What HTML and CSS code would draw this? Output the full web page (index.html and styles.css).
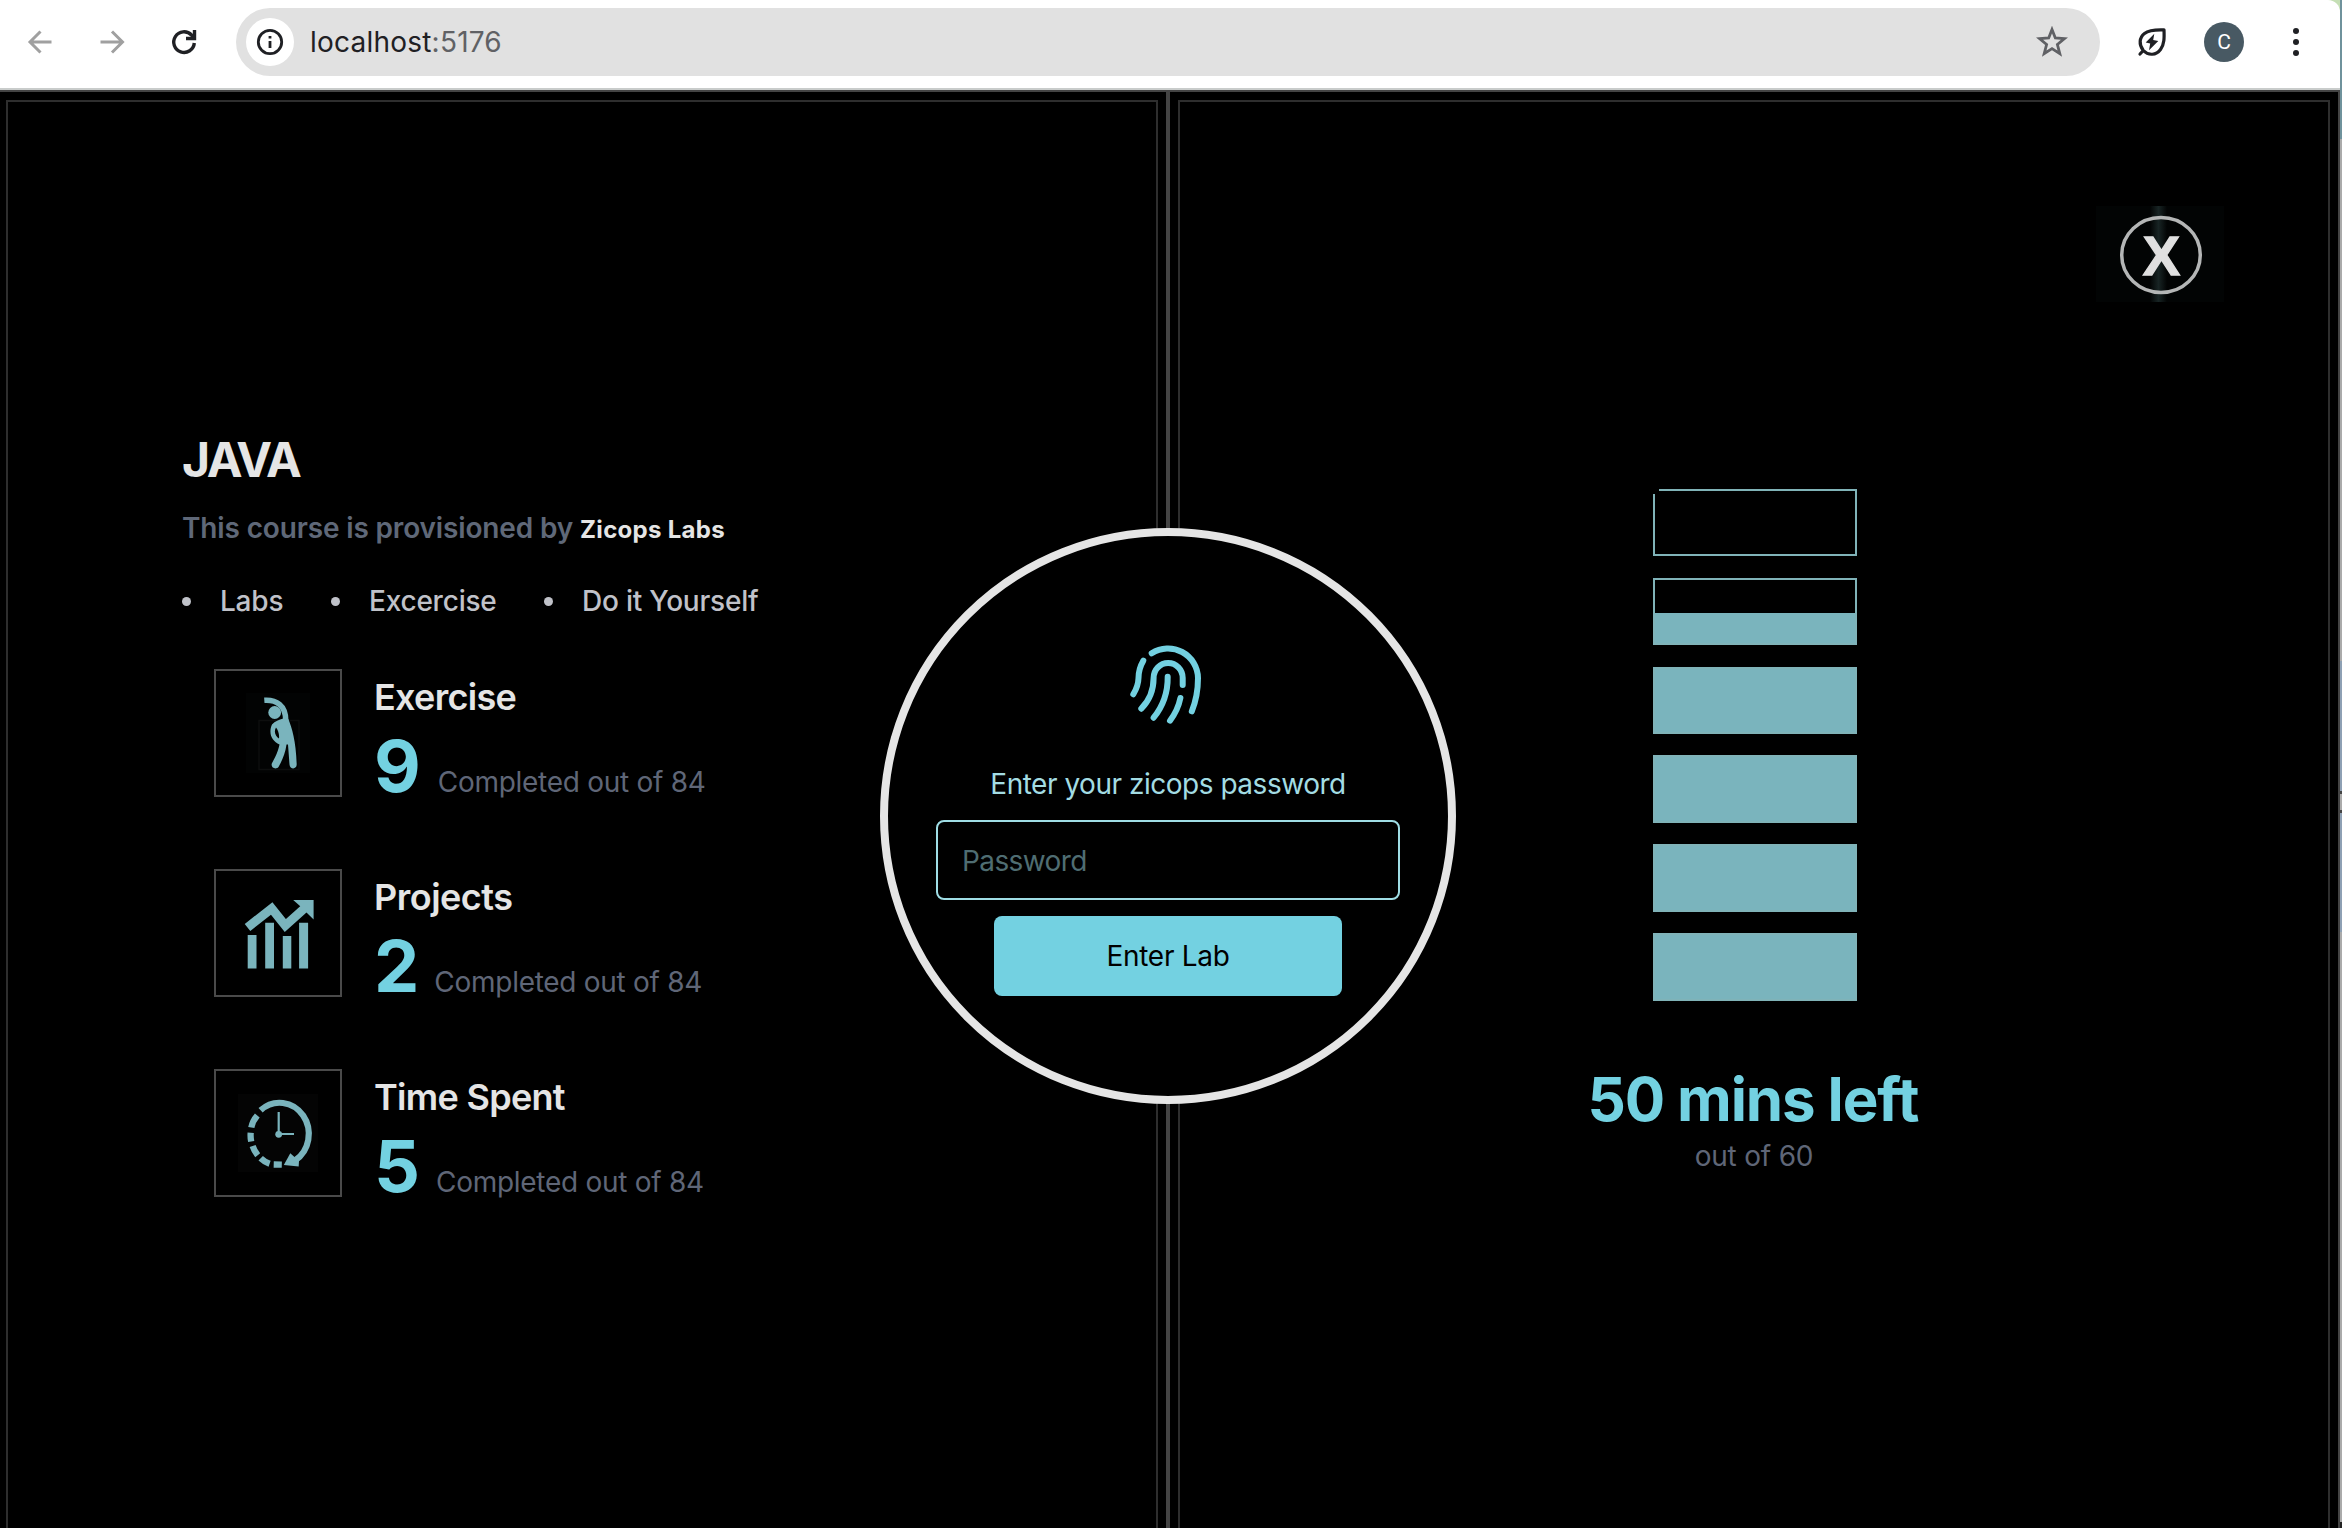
FILE: index.html
```html
<!DOCTYPE html>
<html lang="en">
<head>
<meta charset="utf-8">
<title>Zicops Labs</title>
<link rel="stylesheet" href="styles.css">
</head>
<body>
<div class="window">
  <header class="toolbar">
    <div class="nav">
      <svg class="nav-icon muted" viewBox="0 0 32 32"><path d="M27.500 16H6.500M16.500 5.500 6 16 16.500 26.500"/></svg>
      <svg class="nav-icon muted" viewBox="0 0 32 32"><path d="M4.500 16H26.500M16 5.500 26.500 16 16 26.500"/></svg>
      <svg class="nav-icon dark" viewBox="0 0 32 32"><path d="M26.300 17A10.300 10.300 0 1 1 23.500 9L26 11.600"/><path d="M26.500 4V12.500H18"/></svg>
    </div>
    <div class="address">
      <span class="site-info"><svg viewBox="0 0 28 28"><circle cx="14" cy="14" r="11.700"/><path d="M14 13V20M14 8V10.500"/></svg></span>
      <span class="url">localhost<span class="port">:5176</span></span>
      <svg class="star" viewBox="0 0 32 32"><path d="M16 3.500 19.300 12 28.500 12.600 21.400 18.500 23.800 27.600 16 22.600 8.200 27.600 10.600 18.500 3.500 12.600 12.700 12Z"/></svg>
    </div>
    <svg class="leaf" viewBox="0 0 32 32"><path class="leaf-body" d="M7.300 24.500C2.500 18.500 3.400 11.300 8.500 7.400 13 4 20 3.600 28 3.900 28.300 11.500 28.500 18 24.500 23.500 20.200 29.300 12.500 30 7.300 24.500ZM7.300 24.500 4 28"/><path class="leaf-bolt" d="M18.300 7.700 9.700 16.500 14.200 17.500 13 24.300 22.300 14.900 17.200 14Z"/></svg>
    <span class="avatar">C</span>
    <svg class="dots" viewBox="0 0 8 28"><circle cx="4" cy="3" r="3"/><circle cx="4" cy="14" r="3"/><circle cx="4" cy="25" r="3"/></svg>
  </header>

  <main class="page">
    <section class="panel panel-left">
      <div class="frame course">
        <h1 class="title"><span class="t">JAVA</span></h1>
        <p class="provider"><span class="t by">This course is provisioned by</span><span class="t org">Zicops Labs</span></p>
        <ul class="tags">
          <li class="tag-1"><span class="t">Labs</span></li>
          <li class="tag-2"><span class="t">Excercise</span></li>
          <li class="tag-3"><span class="t">Do it Yourself</span></li>
        </ul>
        <div class="stats">
          <article class="stat">
            <div class="stat-icon"><svg viewBox="0 0 124 124">
              <rect x="30" y="22" width="64" height="80" fill="#020303"/>
              <rect x="43" y="49.500" width="40" height="49" fill="none" stroke="#0d0e0e" stroke-width="1.500"/>
              <circle cx="58.700" cy="41.500" r="6.400" class="ink"/>
              <path class="line" stroke-width="5.500" d="M48.300 29.300C60 28.500 70 34 69.800 50"/>
              <path class="ink" d="M67.200 47.500 72.300 48C76 57 80 70 80.700 93.500 80.800 98.700 73.800 98.700 73.500 93.500L72 73.500 70.500 73.500C69.500 82 66 90 62.500 96 60 99 54.500 97 55.800 92.500 60 85 62 80 63.500 73.500 56 70 52 62.500 56 53.500 59 50 63 49 67.200 47.500ZM60 56.500C57.500 61 59.500 65.500 63 67.500 63.500 63 62 59 60 56.500Z" fill-rule="evenodd"/>
            </svg></div>
            <div class="stat-text"><h2><span class="t">Exercise</span></h2><p><b>9</b><span class="t done">Completed out of 84</span></p></div>
          </article>
          <article class="stat projects">
            <div class="stat-icon"><svg viewBox="0 0 124 124">
              <path class="line" stroke-width="9" d="M31.500 56.500 55.700 37.500 69.300 54.500 90 36"/>
              <path class="ink" d="M77.200 29H97.600V48.500L92 43 84 35Z"/>
              <path class="ink" d="M31.700 64h8.800v33.400h-8.800zM49.200 51.800h8.800v45.600h-8.800zM66.800 65h8.500v32.400h-8.500zM83.100 51.800h9v45.600h-9z"/>
            </svg></div>
            <div class="stat-text"><h2><span class="t">Projects</span></h2><p><b>2</b><span class="t done">Completed out of 84</span></p></div>
          </article>
          <article class="stat time">
            <div class="stat-icon"><svg viewBox="0 0 124 124">
              <rect x="22" y="23" width="80" height="78" fill="#040404"/>
              <path class="line" stroke-width="6.200" d="M44.600 39.300A29.200 31.200 0 1 1 79 89.500"/>
              <path class="ink" d="M67.800 94 74.300 82.300 83 90 82.700 95.500Z"/>
              <path class="line" stroke-width="6.300" d="M41.300 44.500Q36.500 50 35.300 56.500M34.700 61.700Q34.300 66 35.200 70.500M36.600 75Q38.300 80 41.700 84.300M44.700 87.300Q48.500 91 53.600 92.800M57.700 93.500 65.800 93.700"/>
              <path class="line" stroke-width="2.200" d="M62.700 41V63H78"/>
              <circle class="ink" cx="62.700" cy="63.300" r="3.400"/>
            </svg></div>
            <div class="stat-text"><h2><span class="t">Time Spent</span></h2><p><b>5</b><span class="t done">Completed out of 84</span></p></div>
          </article>
        </div>
      </div>
    </section>

    <section class="panel panel-right">
      <div class="frame timer">
        <button class="close" aria-label="Close"><svg viewBox="0 0 128 96"><rect width="128" height="96" fill="#020404"/><rect x="54" width="17" height="96" fill="url(#glow)"/><ellipse cx="65" cy="49" rx="39.300" ry="37.500" fill="none" stroke="#b4b6b6" stroke-width="3.500"/><text x="65.500" y="68.500" text-anchor="middle">X</text><defs><linearGradient id="glow"><stop offset="0" stop-color="#020404"/><stop offset=".5" stop-color="#182424"/><stop offset="1" stop-color="#020404"/></linearGradient></defs></svg></button>
        <div class="bars">
          <i class="bar empty"></i><i class="bar half"></i><i class="bar"></i><i class="bar tall"></i><i class="bar tall"></i><i class="bar tall"></i>
        </div>
        <p class="left"><span class="t">50 mins left</span></p>
        <p class="total"><span class="t">out of 60</span></p>
      </div>
    </section>

    <form class="login">
      <svg class="finger" viewBox="0 0 72 80"><path d="M19.700 9.300A30 30 0 0 1 66 34Q66 52 59.800 67.300M11.300 16.700Q6.500 25 6.500 34 6.300 42 1.300 50.300M9.300 64.700Q21.600 52 21.600 34A14.500 15 0 0 1 50.700 34V41M35.700 32.700Q36 56 21.600 73.700M48.400 54Q46 66 38 76.700"/></svg>
      <label class="prompt"><span class="t">Enter your zicops password</span></label>
      <div class="field"><span class="t">Password</span></div>
      <div class="enter"><span class="t">Enter Lab</span></div>
    </form>
  </main>
</div>
<div class="desktop-edge"></div>
</body>
</html>
```
FILE: styles.css
```css
* { box-sizing: border-box; margin: 0; padding: 0; }
body { width: 2342px; height: 1528px; overflow: hidden; display: flex; background: #c5dfb5; font-family: Inter, "Liberation Sans", sans-serif; font-size: 28px; }
.window { width: 2340px; height: 1528px; }
.t { white-space: nowrap; }

.toolbar { height: 92px; background: #fff; border-bottom: 2px solid #444; box-shadow: inset 0 -2px #c9cccb; display: flex; align-items: center; padding: 0 40px 6px 24px; border-radius: 0 12px 0 0; }
.nav { display: flex; gap: 40px; width: 212px; }
.nav-icon { width: 32px; height: 32px; fill: none; stroke-width: 3; flex: none; }
.muted { stroke: #a0a0a0; }
.dark { stroke: #1f2024; stroke-width: 3.4; }
.address { width: 1864px; height: 68px; border-radius: 34px; background: #e1e1e1; display: flex; align-items: center; padding: 0 32px 0 10px; }
.site-info { width: 48px; height: 48px; border-radius: 50%; background: #fff; display: grid; place-items: center; margin-right: 16px; }
.site-info svg { width: 28px; height: 28px; fill: none; stroke: #1f2024; stroke-width: 2.8; }
.url { color: #1f2024; flex: 1; letter-spacing: .22px; }
.port { color: #606165; }
.star { width: 32px; height: 32px; fill: none; stroke: #606165; stroke-width: 2.8; }
.leaf { width: 32px; height: 32px; margin-left: 36px; fill: none; stroke: #1f2024; stroke-width: 3.2; stroke-linecap: round; stroke-linejoin: round; }
.leaf-bolt { fill: #1f2024; stroke: none; }
.avatar { width: 40px; height: 40px; border-radius: 50%; background: #485963; color: #fff; margin-left: 36px; display: grid; place-items: center; font-family: Roboto, sans-serif; font-size: 21px; }
.dots { width: 8px; height: 28px; margin-left: 48px; fill: #1f2024; }

.page { position: relative; height: 1436px; background: #000; display: flex; overflow: hidden; }
.panel { height: 1446px; border: solid #444; border-width: 0 2px; padding: 8px 8px 0; }
.panel-left { width: 1168px; border-left: 0; padding-left: 6px; }
.panel-right { width: 1172px; }
.frame { height: 1440px; border: 2px solid #2e2e2e; }

.course { padding: 330px 0 0 174px; color: #e5e5e5; }
.title { font-size: 48px; font-weight: 700; line-height: 56px; height: 56px; letter-spacing: -2.4px; }
.provider { display: flex; align-items: baseline; gap: 7px; height: 34px; line-height: 34px; margin-top: 23px; font-weight: 600; color: #5f6878; }
.by { letter-spacing: -.15px; }
.org { color: #e5e5e5; font-size: 24px; font-weight: 700; letter-spacing: .3px; }
.tags { display: flex; list-style: none; margin-top: 39px; height: 34px; line-height: 34px; font-weight: 500; color: #c0c2c9; letter-spacing: -.22px; }
.tags li { display: flex; align-items: center; }
.tags li::before { content: ""; width: 9px; height: 9px; border-radius: 50%; background: currentColor; margin-right: 29px; }
.tag-1 { width: 149px; }
.tag-2 { width: 213px; }
.stats { margin: 51px 0 0 32px; display: grid; gap: 72px; }
.stat { display: flex; height: 128px; gap: 32px; }
.stat-icon { width: 128px; height: 128px; border: 2px solid #4a4a4a; }
.stat-icon svg { display: block; }
.ink { fill: #7ab4bd; }
.line { fill: none; stroke: #7ab4bd; }
h2 { font-size: 36px; font-weight: 600; line-height: 44px; height: 56px; padding-top: 6px; letter-spacing: -.7px; }
.projects h2 { letter-spacing: -.5px; }
.stat-text p { display: flex; align-items: baseline; line-height: 72px; height: 72px; margin-top: 5px; color: #5f6677; }
.stat-text b { font-size: 72px; color: #73d1e1; margin-right: 17px; }
.projects b { margin-right: 15px; }
.time b { margin-right: 16px; }
.done { letter-spacing: -.28px; }

.timer { display: flex; flex-direction: column; align-items: center; }
.close { width: 128px; height: 96px; margin: 104px 104px 0 0; align-self: flex-end; background: none; border: 0; }
.close svg { display: block; width: 128px; height: 96px; }
.close text { font: 700 56px "Liberation Sans", sans-serif; fill: #e0e0e0; stroke: #e0e0e0; stroke-width: 1.3; }
.bars { display: grid; grid-auto-rows: 67px; gap: 21.8px; margin: 187px 0 0 2px; }
.bar { display: block; width: 204px; height: 67px; background: #7ab4bd; border: 2px solid #80b3b8; }
.tall { height: 68px; }
.empty { background: #000; position: relative; }
.empty::before { content: ""; position: absolute; left: -2px; top: -2px; width: 6px; height: 5px; background: #000; }
.half { background: linear-gradient(#000 33px, #7ab4bd 33px); }
.left { font-size: 60px; font-weight: 700; line-height: 72px; color: #73d1e1; margin: 63px 2px 0 0; letter-spacing: -1.15px; }
.total { line-height: 34px; color: #5f6677; margin-top: 4px; letter-spacing: -.2px; }

.login { position: absolute; left: 880px; top: 436px; width: 576px; height: 576px; border: 8px solid #e5e5e5; border-radius: 50%; background: #000; display: flex; flex-direction: column; align-items: center; padding-top: 108px; }
.finger { width: 72px; height: 80px; overflow: visible; fill: none; stroke: #73d1e1; stroke-width: 6; stroke-linecap: round; }
.prompt { color: #a3dce3; height: 34px; line-height: 34px; margin-top: 43px; letter-spacing: -.48px; }
.field { width: 464px; height: 80px; margin-top: 19px; border: 2px solid #9fdde5; border-radius: 8px; padding-left: 24px; line-height: 78px; color: #4f6d72; letter-spacing: -.6px; }
.enter { width: 348px; height: 80px; margin-top: 16px; border-radius: 8px; background: #73d1e1; color: #000; line-height: 80px; text-align: center; letter-spacing: -.3px; }
.desktop-edge { width: 2px; background: linear-gradient(#6f929c 139px, #aaa 139px 661px, #8ea0b4 661px 791px, #444 791px 794px, #aaa 794px 810px, #444 810px 813px, #8ea0b4 813px 932px, #aaa 932px 1522px, #222 1522px); }
```
